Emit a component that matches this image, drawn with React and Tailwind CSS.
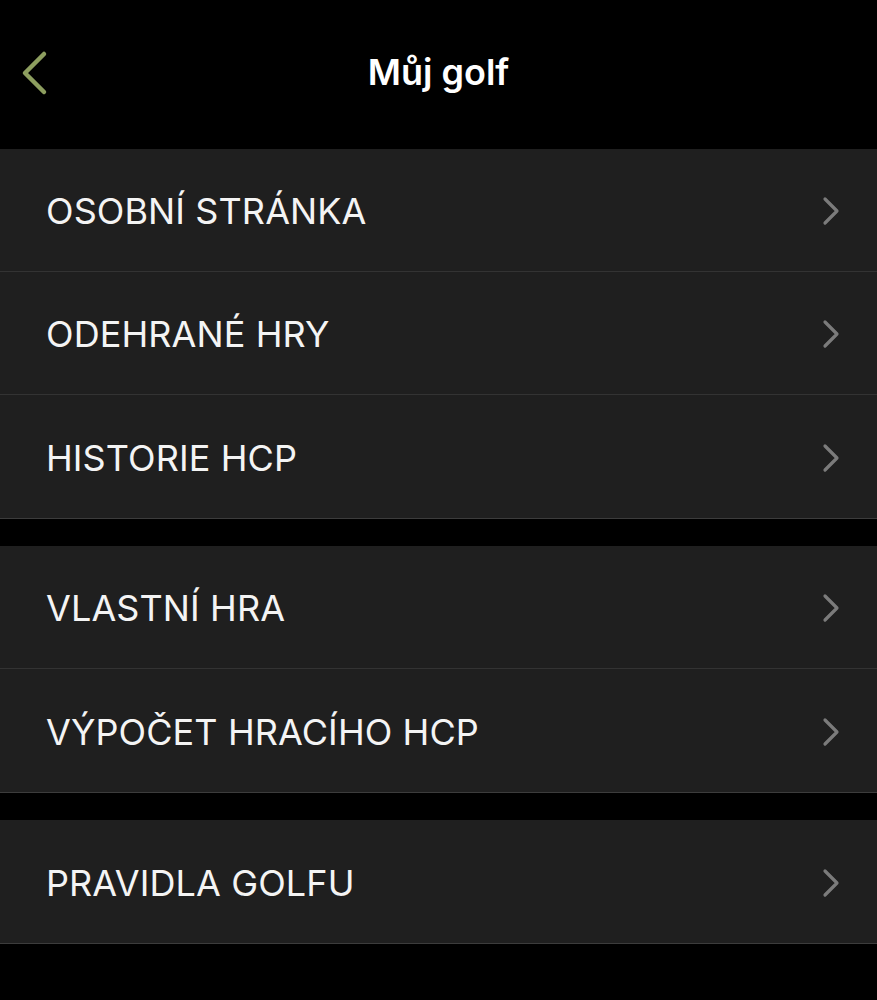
import React from 'react';

const groups = [
    ['OSOBNÍ STRÁNKA', 'ODEHRANÉ HRY', 'HISTORIE HCP'],
    ['VLASTNÍ HRA', 'VÝPOČET HRACÍHO HCP'],
    ['PRAVIDLA GOLFU'],
];

const Chevron = () => (
    <svg width="20" height="30" viewBox="0 0 20 30" fill="none" className="shrink-0">
        <path d="M4 3 L16 15 L4 27" stroke="#7b7b7b" strokeWidth="3.2" strokeLinecap="round" strokeLinejoin="round" />
    </svg>
);

const Row = ({ label }) => (
    <div className="h-[123px] last:h-[124px] flex items-center justify-between pl-[46px] pr-[36px] pt-[2px] border-b border-[#333333] last:border-[#3c3c3c]">
        <span className="text-[36px] text-[#f4f4f4] tracking-[0.1px]">{label}</span>
        <Chevron />
    </div>
);

export default function App() {
    return (
        <div className="w-[877px] h-[1000px] bg-black overflow-hidden" style={{ fontFamily: 'Inter, "Noto Sans", sans-serif' }}>
            {/* hlavička */}
            <div className="h-[149px] relative flex items-start justify-center pt-[49px]">
                <button className="absolute left-[18px] top-[50px]">
                    <svg width="32" height="46" viewBox="0 0 32 46" fill="none">
                        <path d="M26 4 L7 23 L26 42" stroke="#8d9e5f" strokeWidth="4.5" strokeLinecap="round" strokeLinejoin="round" />
                    </svg>
                </button>
                <h1 className="text-[36px] font-semibold text-white leading-[46px]">Můj golf</h1>
            </div>

            <div className="flex flex-col gap-[27px]">
                {groups.map((group, i) => (
                    <div key={i} className="bg-[#1f1f1f]">
                        {group.map(label => (
                            <Row key={label} label={label} />
                        ))}
                    </div>
                ))}
            </div>
        </div>
    );
}
